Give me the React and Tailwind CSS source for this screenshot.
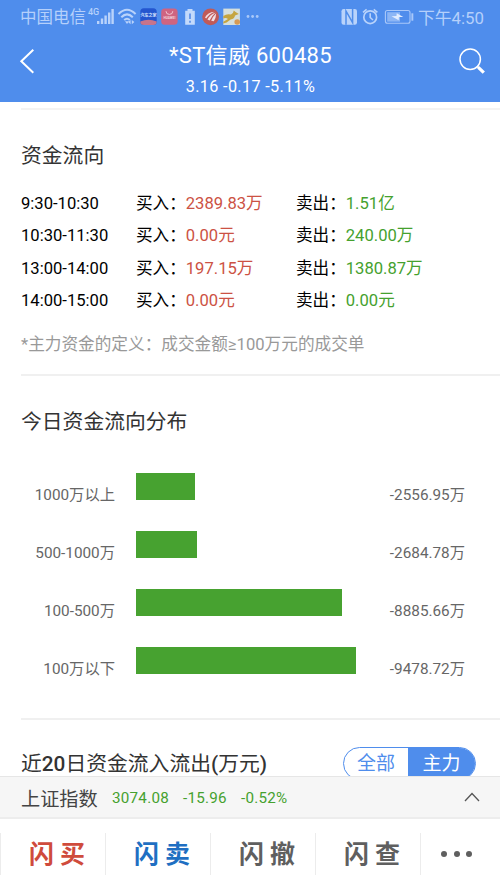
import React from 'react';

const flows = [
    { time: '9:30-10:30', buy: '2389.83万', sell: '1.51亿' },
    { time: '10:30-11:30', buy: '0.00元', sell: '240.00万' },
    { time: '13:00-14:00', buy: '197.15万', sell: '1380.87万' },
    { time: '14:00-15:00', buy: '0.00元', sell: '0.00元' },
];

const bars = [
    { label: '1000万以上', width: 58.5, value: '-2556.95万' },
    { label: '500-1000万', width: 61, value: '-2684.78万' },
    { label: '100-500万', width: 206, value: '-8885.66万' },
    { label: '100万以下', width: 219.6, value: '-9478.72万' },
];

const actions = [
    { first: '闪', second: '买', color: 'text-[#cf4b3c]' },
    { first: '闪', second: '卖', color: 'text-[#1f6fc2]' },
    { first: '闪', second: '撤', color: 'text-[#5f5f5f]' },
    { first: '闪', second: '查', color: 'text-[#5f5f5f]' },
];

const StatusIcons = () => (
    <svg className="block h-[34px] w-[175px]" viewBox="88 0 175 34" fill="none">
        {/* Signal */}
        <g fill="#b9d3fb">
            <rect x="97" y="21" width="2.4" height="3" />
            <rect x="100.8" y="18.5" width="2.4" height="5.5" />
            <rect x="104.4" y="15.5" width="2.4" height="8.5" />
            <rect x="108" y="12.5" width="2.4" height="11.5" />
            <rect x="111.4" y="9" width="2.4" height="15" />
        </g>
        {/* Wifi */}
        <g stroke="#b9d3fb" strokeWidth="2">
            <path d="M118.5 14 Q127 5.5 135.6 14" />
            <path d="M121.3 17.2 Q127 11.5 132.8 17.2" />
            <path d="M124.2 20 Q127 17.4 129.8 20" />
        </g>
        <path d="M125 21.3h4l-2 2.7z" fill="#b9d3fb" />
        <path d="M130.6 20v4.2l-2.6-2.1zM131.8 20v4.2l2.6-2.1z" fill="#b9d3fb" />
        {/* Car app */}
        <rect x="140.3" y="8.2" width="16.4" height="16.8" rx="3.5" fill="#2456cf" />
        <path d="M140.3 21.5q8.2 -3.5 16.4 0a3.5 3.5 0 0 1-3.5 3.5h-9.4a3.5 3.5 0 0 1-3.5-3.5z" fill="#c7748c" />
        <text x="148.5" y="17" textAnchor="middle" fontSize="4" fontWeight="700" fill="#dce8ff">汽车之家</text>
        {/* Huawei */}
        <rect x="161.2" y="8.4" width="16.4" height="16.4" rx="3.5" fill="#cf6481" />
        <path d="M166 11.2a3.4 3.2 0 0 0 6.8 0" stroke="#f0c5d2" strokeWidth="1" />
        <text x="169.4" y="19.4" textAnchor="middle" fontSize="3.2" fontWeight="700" fill="#f3d3dc">HUAWEI</text>
        {/* Battery warning */}
        <path d="M187.5 9h5v1.7h2.3v14h-9.6v-14h2.3z" fill="#c4dafb" />
        <path d="M190 13.5v5.5M190 20.7v2" stroke="#5b8fe8" strokeWidth="1.7" />
        {/* Feather */}
        <circle cx="210.6" cy="16.8" r="8.4" fill="#c05a58" />
        <path d="M205 17.6Q207.5 12.4 214.6 11.8Q209 14 206.2 18.6z" fill="#f1dfe4" />
        <path d="M207.4 19.4Q210 14.4 215.6 12.4Q211.6 16 209.6 20.4z" fill="#f1dfe4" />
        <path d="M211.2 20.8Q213 16 216.2 13.2Q216 18 213.8 21.2z" fill="#f1dfe4" />
        {/* Kangaroo */}
        <rect x="223.3" y="8.6" width="16.6" height="16.4" fill="#d5dfdc" />
        <path d="M223.3 16Q227 13.2 231 14.6Q233.4 13.4 233.8 10.4L235.6 12L238.8 14L235 15.4Q234.6 18.6 230.6 19.6L226.6 22.6L223.3 23.6L223.3 21.8L228 19Q226 17.4 223.3 18.4z" fill="#c5a540" />
        <circle cx="237.2" cy="22" r="2.8" fill="#d59a55" />
        <g fill="#a9c8f9">
            <circle cx="248" cy="16.5" r="1.4" />
            <circle cx="252.6" cy="16.5" r="1.4" />
            <circle cx="257.2" cy="16.5" r="1.4" />
        </g>
    </svg>
);

const DeviceIcons = () => (
    <svg className="block h-[34px] w-[76px]" viewBox="340 0 76 34" fill="none">
        {/* NFC */}
        <rect x="341.5" y="9" width="15.5" height="15.8" rx="2.2" fill="#b9d3fb" />
        <path d="M346 24.8V11L352.6 22.6V9" stroke="#4f8dea" strokeWidth="1.5" />
        {/* Alarm */}
        <circle cx="370.2" cy="17.2" r="6.4" stroke="#b9d3fb" strokeWidth="1.7" />
        <path d="M370.2 13.2v4.3l2.8 2.5M363 12.4l3.6-3M377.4 12.4l-3.6-3" stroke="#b9d3fb" strokeWidth="1.6" />
        {/* Battery */}
        <rect x="385.4" y="10.5" width="24.6" height="12.8" rx="2" stroke="#a9c8f9" strokeWidth="1.1" />
        <rect x="387.2" y="12.2" width="12.8" height="9.4" fill="#8db6f5" />
        <path d="M391.5 16.3l5 -.2 .2-2.8 6.6 3.8h-4.4l-.2 3.2z" fill="#e2edff" />
        <rect x="411.4" y="13.3" width="1.9" height="7.4" fill="#a9c8f9" />
    </svg>
);

const Header = () => (
    <header className="h-[102px] shrink-0 bg-[#4f8dec] text-white">
        <div className="flex h-[34px] items-center pl-5 pr-4 text-[#b5d0fb]">
            <span className="w-[68px] pt-[2px] text-[16.5px] leading-[32px]">中国电信</span>
            <div className="relative">
                <StatusIcons />
                <span className="absolute left-0 top-[7px] text-[9px] leading-[11px] font-medium">4G</span>
            </div>
            <div className="ml-auto flex items-center gap-[2px]">
                <DeviceIcons />
                <span className="w-[66px] whitespace-nowrap pt-[2px] text-[16.8px] leading-[32px]">下午4:50</span>
            </div>
        </div>
        <div className="flex h-[68px]">
            <svg className="mt-[14px] ml-[19px] h-7 w-[30px]" viewBox="0 0 30 28" fill="none" stroke="#fff" strokeWidth="2">
                <path d="M14.3 1.8L2.3 13.2L14.3 24.8" />
            </svg>
            <div className="flex flex-1 flex-col items-center pr-[5px]">
                <h1 className="mt-[7px] text-[22px] leading-[30px] tracking-[0.3px]">*ST信威 600485</h1>
                <p className="mt-[6px] text-[16.2px] leading-5 tracking-[0.35px]">3.16 -0.17 -5.11%</p>
            </div>
            <svg className="mt-[13px] mr-[13px] h-7 w-[30px]" viewBox="0 0 30 28" fill="none" stroke="#fff">
                <circle cx="13.2" cy="12.3" r="10.2" strokeWidth="1.5" />
                <path d="M20 19.2L22 21" strokeWidth="1.8" />
                <path d="M21.3 20.3L26.8 25.6" strokeWidth="3.2" />
            </svg>
        </div>
    </header>
);

const FundFlow = () => (
    <section className="ml-[21px] mt-[6px] h-[266px] border-t-2 border-[#f3f3f3]">
        <h2 className="pt-[31px] text-[20.8px] leading-[30px] text-[#333]">资金流向</h2>
        <div className="mt-[17px] text-[16.6px] text-black">
            {flows.map((row) => (
                <div key={row.time} className="flex h-[32.4px] items-center whitespace-nowrap">
                    <span className="w-[115px]">{row.time}</span>
                    <span className="w-[160px]">
                        买入：<span className="text-[#cc5244]">{row.buy}</span>
                    </span>
                    <span>
                        卖出：<span className="text-[#45a12e]">{row.sell}</span>
                    </span>
                </div>
            ))}
        </div>
        <p className="mt-[15px] whitespace-nowrap text-[16.65px] leading-6 text-[#999]">*主力资金的定义：成交金额≥100万元的成交单</p>
    </section>
);

const Distribution = () => (
    <section className="ml-[21px] h-[344px] border-t-2 border-[#f0f0f0]">
        <h2 className="pt-[31px] text-[20.8px] leading-[30px] text-[#333]">今日资金流向分布</h2>
        <div className="mt-[36px] text-[15.3px] text-[#666]">
            {bars.map((bar) => (
                <div key={bar.label} className="flex h-[58.1px] items-start">
                    <span className="mt-[10px] w-[94px] text-right leading-6">{bar.label}</span>
                    <div className="ml-[21px] mr-auto h-[26.5px] bg-[#47a230]" style={{ width: bar.width }} />
                    <span className="mt-[10px] mr-[35px] leading-6">{bar.value}</span>
                </div>
            ))}
        </div>
    </section>
);

const Recent = () => (
    <section className="ml-[21px] flex h-[58px] items-start overflow-hidden border-t-2 border-[#f0f0f0]">
        <h2 className="mt-[33px] whitespace-nowrap text-[20.8px] leading-[23px] text-[#333]">
            近<span className="font-medium">20</span>日资金流入流出<span className="font-medium">(</span>万元<span className="font-medium">)</span>
        </h2>
        <div className="ml-auto mr-6 mt-[27px] flex h-[33px] w-[133px] overflow-hidden rounded-full border border-[#4f8dec] text-[19px]">
            <span className="flex-1 pt-[4px] text-center leading-[24px] text-[#4f8dec]">全部</span>
            <span className="w-[67px] bg-[#4f8dec] pt-[4px] text-center leading-[24px] text-white">主力</span>
        </div>
    </section>
);

const IndexStrip = () => (
    <div className="flex h-[43px] shrink-0 items-center border-t border-b-2 border-t-[#e6e6e6] border-b-[#ededed] bg-[#f6f6f6] pl-[21px] pr-5">
        <span className="w-[91px] pt-[5px] text-[19.2px] leading-6 text-[#444]">上证指数</span>
        <div className="flex pt-[3px] text-[15.2px] tracking-[0.25px] text-[#45a12e]">
            <span className="w-[71px]">3074.08</span>
            <span className="w-[58px]">-15.96</span>
            <span>-0.52%</span>
        </div>
        <svg className="ml-auto h-[10px] w-4" viewBox="0 0 16 10" fill="none" stroke="#555" strokeWidth="1.3">
            <path d="M1 9L8 1.5L15 9" />
        </svg>
    </div>
);

const ActionBar = () => (
    <nav className="flex h-[69px] shrink-0 items-center bg-white">
        {actions.map((item) => (
            <div
                key={item.second}
                className={`flex h-[42px] w-[105px] items-center justify-center gap-[6px] border-l border-[#ececec] pl-2 pt-[3px] text-[25px] leading-[36px] font-bold ${item.color}`}
            >
                <span>{item.first}</span>
                <span>{item.second}</span>
            </div>
        ))}
        <div className="flex h-[42px] flex-1 items-center gap-[6.5px] border-l border-[#ececec] pl-5">
            <i className="size-[6px] rounded-full bg-[#5f5f5f]" />
            <i className="size-[6px] rounded-full bg-[#5f5f5f]" />
            <i className="size-[6px] rounded-full bg-[#5f5f5f]" />
        </div>
    </nav>
);

const App = () => {
    return (
        <div className="flex h-[888px] w-[500px] flex-col overflow-hidden bg-white font-[Roboto,'Noto_Sans_CJK_SC',sans-serif]">
            <Header />
            <main className="h-[674px] shrink-0 overflow-hidden">
                <FundFlow />
                <Distribution />
                <Recent />
            </main>
            <IndexStrip />
            <ActionBar />
        </div>
    );
};

export default App;
